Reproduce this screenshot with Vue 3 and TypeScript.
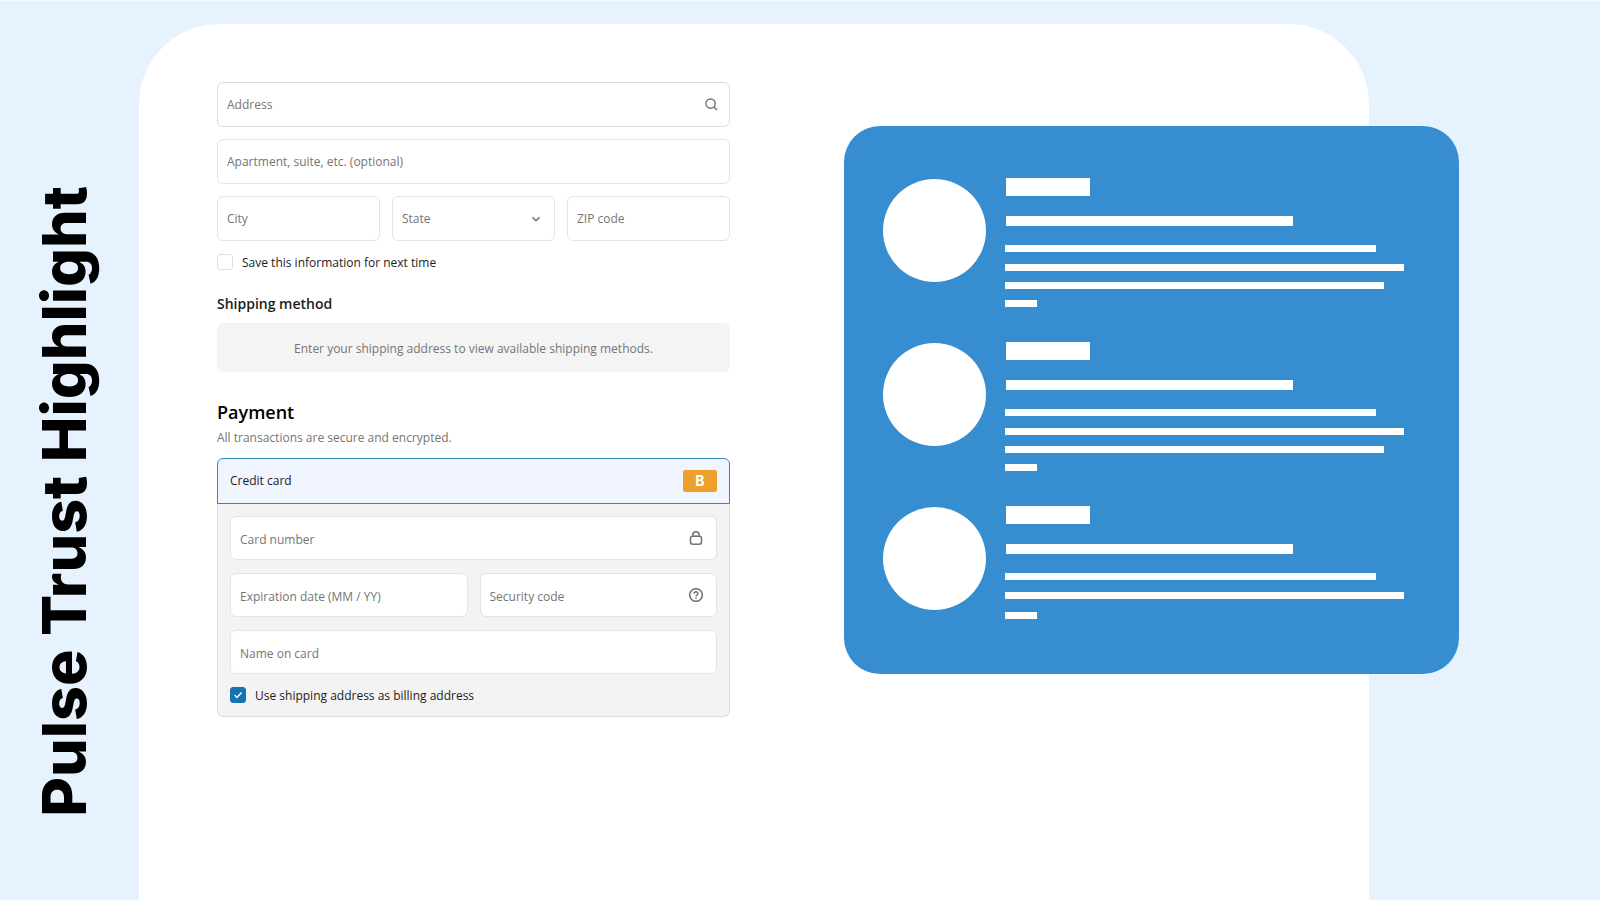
<script setup lang="ts">
import { ref } from 'vue'

interface Review {
  lines: string[]
}

const reviews: Review[] = [
  { lines: ['long', 'full', 'medium', 'stub'] },
  { lines: ['long', 'full', 'medium', 'stub'] },
  { lines: ['long', 'full', 'stub last'] },
]

const saveInfo = ref(false)
const sameBilling = ref(true)
const state = ref('')
</script>

<template>
  <div class="page">
    <header class="rail">
      <h1 class="title">Pulse Trust Highlight</h1>
    </header>

    <main class="sheet">
      <form class="checkout" @submit.prevent>
        <div class="stack">
          <div class="field strong">
            <input type="text" placeholder="Address" aria-label="Address" />
            <svg class="icon search" viewBox="0 0 14 14" aria-hidden="true">
              <circle cx="6" cy="6" r="5" />
              <path d="M9.6 9.6 13 13" />
            </svg>
          </div>
          <div class="field">
            <input type="text" placeholder="Apartment, suite, etc. (optional)" aria-label="Apartment, suite, etc. (optional)" />
          </div>
          <div class="row thirds">
            <div class="field">
              <input type="text" placeholder="City" aria-label="City" />
            </div>
            <div class="field">
              <select v-model="state" aria-label="State">
                <option value="">State</option>
              </select>
              <svg class="icon chevron" viewBox="0 0 10 10" aria-hidden="true">
                <path d="M1.5 3.2 5 6.7 8.5 3.2" />
              </svg>
            </div>
            <div class="field">
              <input type="text" placeholder="ZIP code" aria-label="ZIP code" />
            </div>
          </div>
          <label class="check">
            <input v-model="saveInfo" type="checkbox" />
            <span>Save this information for next time</span>
          </label>
        </div>

        <section class="shipping">
          <h3>Shipping method</h3>
          <p class="notice">Enter your shipping address to view available shipping methods.</p>
        </section>

        <section class="payment">
          <h2>Payment</h2>
          <p class="hint">All transactions are secure and encrypted.</p>
          <div class="method">
            <div class="method-head">
              <span>Credit card</span>
              <span class="badge">B</span>
            </div>
            <div class="method-body">
              <div class="field">
                <input type="text" placeholder="Card number" aria-label="Card number" />
                <svg class="icon lock" viewBox="0 0 14 14" aria-hidden="true">
                  <rect x="1.5" y="5.2" width="11" height="8" rx="2.2" />
                  <path d="M3.8 5.2V4a3.2 3.2 0 0 1 6.4 0v1.2" />
                </svg>
              </div>
              <div class="row halves">
                <div class="field">
                  <input type="text" placeholder="Expiration date (MM / YY)" aria-label="Expiration date (MM / YY)" />
                </div>
                <div class="field">
                  <input type="text" placeholder="Security code" aria-label="Security code" />
                  <svg class="icon lock" viewBox="0 0 14 14" aria-hidden="true">
                    <circle cx="7" cy="7" r="6.3" />
                    <path d="M5.1 5.7a1.9 1.9 0 1 1 2.9 1.5c-.7.4-1 .7-1 1.3" />
                    <path d="M7 9.8v1.1" />
                  </svg>
                </div>
              </div>
              <div class="field">
                <input type="text" placeholder="Name on card" aria-label="Name on card" />
              </div>
              <label class="check">
                <input v-model="sameBilling" type="checkbox" />
                <svg class="tick" viewBox="0 0 16 16" aria-hidden="true"><path d="M4.5 8 7 10.5 11.5 5.5" /></svg>
                <span>Use shipping address as billing address</span>
              </label>
            </div>
          </div>
        </section>
      </form>

      <aside class="reviews">
        <article v-for="(review, i) in reviews" :key="i" class="review">
          <div class="avatar"></div>
          <div class="bars">
            <div class="bar name"></div>
            <div class="bar headline"></div>
            <div v-for="(line, j) in review.lines" :key="j" class="bar line" :class="line"></div>
          </div>
        </article>
      </aside>
    </main>
  </div>
</template>

<style>
body {
  margin: 0;
}
</style>

<style scoped>
* {
  box-sizing: border-box;
}

.page {
  display: grid;
  grid-template-columns: 139px 1fr;
  min-height: 100vh;
  padding: 23px 231px 0 0;
  border-top: 1px solid #f3f9fe;
  background: #e6f3fe;
  color: #1c1c1c;
  font: 12px/16px "Open Sans", "Noto Sans", sans-serif;
}

.rail {
  display: flex;
  justify-content: center;
  align-items: flex-start;
  padding: 162px 12px 0 0;
}

.title {
  margin: 0;
  color: #000;
  font: 800 61px/72px Inter, sans-serif;
  white-space: nowrap;
  writing-mode: vertical-rl;
  transform: rotate(180deg);
}

.sheet {
  display: grid;
  grid-template-columns: 513fr 525fr;
  align-items: start;
  column-gap: 114px;
  padding: 58px 0 0 78px;
  border-radius: 80px 80px 0 0;
  background: #fff;
}

.checkout,
.reviews {
  min-width: 0;
}

.checkout {
  margin: 0;
}

.stack {
  display: flex;
  flex-direction: column;
  gap: 12px;
}

.row {
  display: grid;
  gap: 12px;
}

.thirds {
  grid-template-columns: repeat(3, 1fr);
}

.halves {
  grid-template-columns: repeat(2, 1fr);
}

.field {
  display: flex;
  align-items: center;
  height: 45px;
  min-width: 0;
  border: 1px solid #e4e4e4;
  border-radius: 6px;
  background: #fff;
}

.strong {
  border-color: #dcdcdc;
}

.field input,
.field select {
  flex: 1;
  width: 0;
  height: 100%;
  padding: 0 9px;
  border: 0;
  outline: 0;
  appearance: none;
  background: none;
  color: #757575;
  font: inherit;
}

.field input::placeholder {
  color: #757575;
  opacity: 1;
}

.icon {
  flex: none;
  fill: none;
  stroke: #707070;
  stroke-width: 1.5;
}

.search {
  width: 13px;
  height: 13px;
  margin-right: 11px;
}

.chevron {
  width: 10px;
  height: 10px;
  margin-right: 13px;
}

.lock {
  width: 14px;
  height: 14px;
  margin-right: 13px;
}

.check {
  display: flex;
  align-items: center;
  gap: 9px;
  height: 16px;
  position: relative;
}

.stack .check {
  height: 18px;
}

.check span {
  padding-top: 2px;
}

.check input {
  appearance: none;
  width: 16px;
  height: 16px;
  margin: 0;
  border: 1px solid #dedede;
  border-radius: 3px;
  background: #fff;
}

.check input:checked {
  border-color: #1773b0;
  background: #1773b0;
}

.tick {
  position: absolute;
  left: 0;
  top: 0;
  width: 16px;
  height: 16px;
  fill: none;
  stroke: #fff;
  stroke-width: 1.4;
  pointer-events: none;
}

h2,
h3,
p {
  margin: 0;
}

h3 {
  font-size: 14px;
  font-weight: 600;
  line-height: 20px;
}

h2 {
  color: #000;
  font-size: 18px;
  font-weight: 600;
  line-height: 24px;
}

.shipping {
  margin-top: 23px;
}

.notice {
  margin-top: 9px;
  padding: 17px 16px 15px;
  border-radius: 6px;
  background: #f4f4f4;
  color: #757575;
  line-height: 17px;
  text-align: center;
}

.payment {
  margin-top: 28px;
}

.hint {
  margin-top: 6px;
  color: #757575;
}

.method {
  margin-top: 12px;
}

.method-head {
  display: flex;
  justify-content: space-between;
  align-items: center;
  height: 46px;
  padding: 0 12px;
  border: 1px solid #3586c0;
  border-radius: 6px 6px 0 0;
  background: #f0f5ff;
}

.badge {
  display: grid;
  place-items: center;
  width: 34px;
  height: 22px;
  border-radius: 2px;
  background: #eda12d;
  color: #fff;
  font: 700 14px/20px Inter, sans-serif;
}

.method-body {
  display: flex;
  flex-direction: column;
  gap: 13px;
  padding: 12px 12px 13px;
  border: 1px solid #dedede;
  border-top: 0;
  border-radius: 0 0 6px 6px;
  background: #f3f3f3;
}

.method-body .field {
  height: 44px;
}

.method-body .field input {
  padding-top: 2px;
}

.reviews {
  display: flex;
  flex-direction: column;
  gap: 35px;
  margin: 44px -90px 0 0;
  padding: 52px 55px 55px 39px;
  border-radius: 36px;
  background: #368ed0;
}

.review {
  display: grid;
  grid-template-columns: 103px 1fr;
  column-gap: 19px;
}

.avatar {
  width: 103px;
  height: 103px;
  margin-top: 1px;
  border-radius: 50%;
  background: #fff;
}

.bar {
  background: #fff;
}

.name {
  width: 21%;
  height: 18px;
  margin: 0 0 20px 1px;
}

.headline {
  width: 72%;
  height: 10px;
  margin: 0 0 19px 1px;
}

.line {
  height: 7px;
  margin-bottom: 11px;
}

.line:last-child {
  margin-bottom: 0;
}

.long {
  width: 93%;
  margin-bottom: 12px;
}

.full {
  width: 100%;
}

.medium {
  width: 95%;
}

.stub {
  width: 8%;
}

.last {
  margin-top: 13px;
}
</style>
